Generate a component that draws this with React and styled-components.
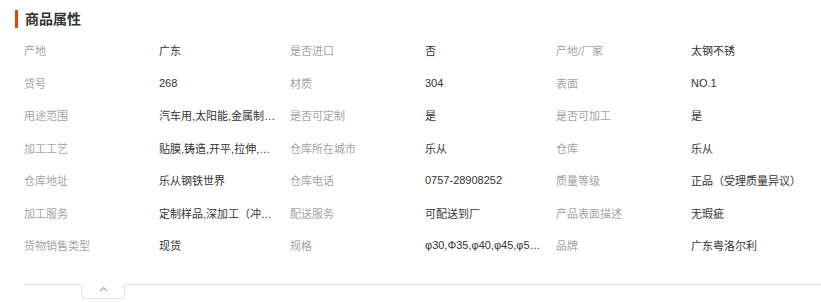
import styled, { createGlobalStyle } from "styled-components";

const GlobalStyle = createGlobalStyle`
  body {
    margin: 0;
    background: #fff;
    font-family: "Liberation Sans", "Noto Sans CJK SC", sans-serif;
  }
`;

const attrs = [
  ["产地", "广东"],
  ["是否进口", "否"],
  ["产地/厂家", "太钢不锈"],
  ["货号", "268"],
  ["材质", "304"],
  ["表面", "NO.1"],
  ["用途范围", "汽车用,太阳能,金属制品,五金"],
  ["是否可定制", "是"],
  ["是否可加工", "是"],
  ["加工工艺", "贴膜,铸造,开平,拉伸,折弯"],
  ["仓库所在城市", "乐从"],
  ["仓库", "乐从"],
  ["仓库地址", "乐从钢铁世界"],
  ["仓库电话", "0757-28908252"],
  ["质量等级", "正品（受理质量异议）"],
  ["加工服务", "定制样品,深加工（冲压）"],
  ["配送服务", "可配送到厂"],
  ["产品表面描述", "无瑕疵"],
  ["货物销售类型", "现货"],
  ["规格", "φ30,Φ35,φ40,φ45,φ50,φ60"],
  ["品牌", "广东粤洛尔利"],
];

const App = () => (
  <>
    <GlobalStyle />
    <Section>
      <Title>商品属性</Title>
      <Grid>
        {attrs.map(([label, value]) => (
          <Cell key={label}>
            <Label>{label}</Label>
            <Value title={value}>{value}</Value>
          </Cell>
        ))}
      </Grid>
      <Footer>
        <Toggle>
          <svg width="9" height="6" viewBox="0 0 9 6">
            <polyline
              points="1,5 4.5,1.5 8,5"
              fill="none"
              stroke="#aaa"
              strokeWidth="1.2"
            />
          </svg>
        </Toggle>
      </Footer>
    </Section>
  </>
);

export default App;

const Section = styled.div`
  padding-top: 10px;
`;

const Title = styled.h3`
  margin: 0 0 6px 15px;
  padding: 3px 0 3px 7px;
  border-left: 3px solid #f0400a;
  font-size: 14px;
  line-height: 12px;
  height: 12px;
  font-weight: bold;
  color: #333;
`;

const Grid = styled.div`
  display: grid;
  grid-template-columns: repeat(3, 266px);
  grid-auto-rows: 32.5px;
  padding-left: 24px;
`;

const Cell = styled.div`
  display: grid;
  grid-template-columns: 135px 131px;
  align-items: center;
  font-size: 11px;
`;

const Label = styled.span`
  color: #a3a3a3;
  white-space: nowrap;
`;

const Value = styled.span`
  color: #333;
  max-width: 118px;
  white-space: nowrap;
  overflow: hidden;
  text-overflow: ellipsis;
`;

const Footer = styled.div`
  margin: 22px 0 0 24px;
  border-top: 1px solid #e4e4e4;
  padding-left: 57px;
`;

const Toggle = styled.div`
  width: 42px;
  height: 12px;
  margin-top: -1px;
  padding-top: 2px;
  background: #fff;
  border: 1px solid #e4e4e4;
  border-top: none;
  border-radius: 0 0 4px 4px;
  display: flex;
  justify-content: center;
`;
